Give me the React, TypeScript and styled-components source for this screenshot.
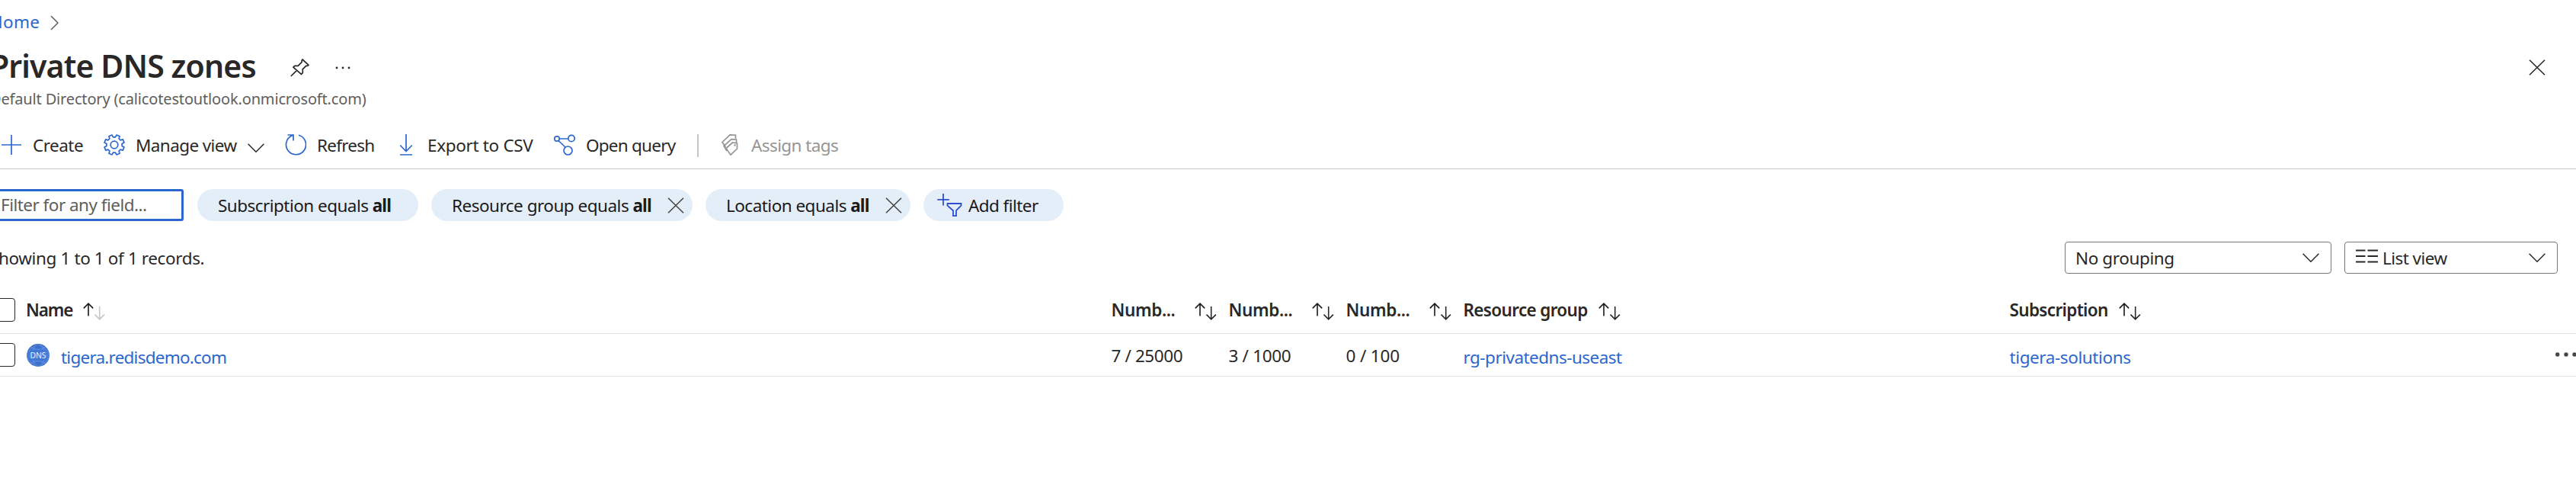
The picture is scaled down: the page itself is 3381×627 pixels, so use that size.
import React from "react";
import styled, { createGlobalStyle } from "styled-components";

const ink = "#292827";
const blue = "#2c67cd";

const GlobalStyle = createGlobalStyle`
  html, body { margin: 0; background: #fff; overflow: hidden; }
  * { box-sizing: border-box; }
  svg { display: block; flex: none; fill: none; }
`;

const Page = styled.main`
  height: 627px;
  overflow: hidden;
  color: ${ink};
  font-family: "Noto Sans", "Open Sans", sans-serif;
  font-size: 22.5px;
  white-space: nowrap;
`;

const Text = styled.span<{ $ls?: number }>`
  letter-spacing: ${(p) => p.$ls ?? 0}px;
`;
const Link = styled.a<{ $ls?: number }>`
  color: ${blue};
  letter-spacing: ${(p) => p.$ls ?? 0}px;
`;
const Bold = styled.b`
  font-weight: 700;
  letter-spacing: -0.9px;
`;

const Breadcrumb = styled.nav`
  display: flex;
  align-items: center;
  height: 56px;
  padding-top: 1px;
  margin-left: -13px;
  gap: 14px;
  & > svg { margin-top: 3px; }
`;
const TitleBar = styled.header`
  display: flex;
  align-items: center;
  height: 60px;
  margin-left: -13px;
  padding-right: 40px;
  & > svg { margin-top: 5px; }
`;
const Title = styled.h1`
  margin: 0 45px 0 0;
  font-size: 41px;
  font-weight: 600;
  line-height: 60px;
  letter-spacing: -0.87px;
`;
const TitleActions = styled.div`
  display: flex;
  align-items: center;
  gap: 34px;
  flex: 1;
  padding-top: 5px;
`;
const Subtitle = styled.div`
  height: 28px;
  line-height: 28px;
  margin-left: -13px;
  font-size: 20px;
  letter-spacing: -0.16px;
  color: #605e5c;
`;

const Toolbar = styled.div`
  display: flex;
  height: 78px;
  padding: 16px 0 0 1px;
  border-bottom: 1px solid #c8c6c4;
`;
const Command = styled.div<{ $width: number; $disabled?: boolean }>`
  display: flex;
  align-items: center;
  gap: 14px;
  width: ${(p) => p.$width}px;
  color: ${(p) => (p.$disabled ? "#979593" : ink)};
  & > svg:first-child { stroke: ${(p) => (p.$disabled ? "#979593" : blue)}; margin-top: -2px; }
  & > svg:last-child { margin-top: 6px; }
`;
const Separator = styled.div`
  align-self: center;
  width: 2px;
  height: 30px;
  margin: 0 27px 0 0;
  background: #c8c6c4;
`;

const Filters = styled.div`
  display: flex;
  align-items: center;
  height: 42px;
  margin-top: 26px;
`;
const FilterField = styled.div`
  width: 244px;
  height: 42px;
  margin: 0 18px 0 -3px;
  padding-left: 1px;
  line-height: 36px;
  border: 3px solid ${blue};
  border-radius: 3px;
  color: #605e5c;
`;
const Pill = styled.div<{ $width: number; $pad?: number }>`
  display: flex;
  align-items: center;
  width: ${(p) => p.$width}px;
  height: 42px;
  margin-right: 17px;
  padding: 0 11px 0 ${(p) => p.$pad ?? 27}px;
  border-radius: 21px;
  background: #e4eef9;
  color: #1b1a19;
  & > svg:last-child { margin-left: auto; }
`;
const PillIcon = styled.svg`
  margin-right: 8px;
`;

const Summary = styled.div`
  display: flex;
  align-items: center;
  height: 42px;
  margin: 27px 24px 0 -14px;
`;
const Selects = styled.div`
  display: flex;
  gap: 17px;
  margin-left: auto;
`;
const Select = styled.div<{ $width: number }>`
  display: flex;
  align-items: center;
  width: ${(p) => p.$width}px;
  height: 42px;
  padding: 0 15px 0 13px;
  border: 1.5px solid #7a7876;
  border-radius: 4px;
  & > svg:last-child { margin-left: auto; }
`;
const ListGlyph = styled.svg`
  margin: -5px 6px 0 1px;
`;

const Table = styled.section`
  margin-top: 16px;
`;
const Row = styled.div<{ $height: number }>`
  display: grid;
  grid-template-columns: 1458.5px 154px 154px 154px 717px 1fr;
  align-items: center;
  height: ${(p) => p.$height}px;
  border-bottom: 1px solid #e6e5e4;
`;
const Cell = styled.div<{ $drop?: number }>`
  display: flex;
  align-items: center;
  padding-top: ${(p) => p.$drop ?? 0}px;
`;
const HeadCell = styled(Cell)<{ $spread?: boolean }>`
  font-weight: 600;
  justify-content: ${(p) => (p.$spread ? "space-between" : "flex-start")};
  padding-right: ${(p) => (p.$spread ? 16 : 0)}px;
  gap: ${(p) => (p.$spread ? 0 : 14)}px;
  & > svg { margin-top: 4px; }
`;
const Checkbox = styled.span`
  flex: none;
  width: 30px;
  height: 31px;
  margin: 0 0 0 -10px;
  border: 1.5px solid ${ink};
  border-radius: 4px;
`;
const NameText = styled.span`
  padding-top: 5px;
`;
const NameCell = styled(Cell)`
  gap: 15px;
`;
const LastCell = styled(Cell)`
  justify-content: space-between;
`;
const MoreDots = styled.svg`
  margin-top: -7px;
`;

const Chevron = ({ color = ink }: { color?: string }) => (
  <svg width="22" height="12" viewBox="0 0 22 12" stroke={color} strokeWidth="1.5">
    <path d="M.6.8 11 11.2 21.4.8" />
  </svg>
);
const Cross = ({ color = "#484644" }: { color?: string }) => (
  <svg width="22" height="21" viewBox="0 0 22 21" stroke={color} strokeWidth="1.6">
    <path d="m1 .7 20 19.6M21 .7 1 20.3" />
  </svg>
);
const Sort = ({ down = ink }: { down?: string }) => (
  <svg width="29" height="23" viewBox="0 0 29 23" strokeWidth="1.6">
    <path stroke="#1b1a19" d="M7 17.5V1.2M.8 7.4 7 1.2l6.2 6.2" />
    <path stroke={down} d="M21.7 5v16.7M15.5 15.6l6.2 6.2 6.2-6.2" />
  </svg>
);

const gearPath = (() => {
  const pts: string[] = [];
  for (let i = 0; i < 8; i++) {
    const a = (i * Math.PI) / 4 + Math.PI / 8;
    for (const [offset, r] of [[-0.25, 10.2], [-0.17, 13.3], [0.17, 13.3], [0.25, 10.2]]) {
      pts.push(`${(14 + r * Math.cos(a + offset)).toFixed(2)} ${(14 + r * Math.sin(a + offset)).toFixed(2)}`);
    }
  }
  return `M${pts.join("L")}Z`;
})();

const Icon = ({ children }: { children: React.ReactNode }) => (
  <svg width="28" height="28" viewBox="0 0 28 28" strokeWidth="1.7">{children}</svg>
);

const DnsIcon = () => (
  <svg width="30" height="30" viewBox="0 0 30 30">
    <defs>
      <linearGradient id="globe" x1="0" y1="0" x2="0" y2="1">
        <stop offset="0" stopColor="#3467c6" />
        <stop offset=".5" stopColor="#4a80dc" />
        <stop offset="1" stopColor="#3568c8" />
      </linearGradient>
    </defs>
    <circle cx="15" cy="15" r="15" fill="url(#globe)" />
    <g stroke="#86acea" strokeWidth=".7" opacity=".75">
      <path d="M5 4q10 7 20 0M5 26q10-7 20 0M8 9Q9 4 15 .5 22 4 23 9M8 21q1 5 7 8.5 7-3.500 8-8.5M1 11Q6 6 12 1M29 11Q24 6 18 1M1 19q5 6 11 10M29 19q-5 6-11 10" />
    </g>
    <text x="15" y="19.2" textAnchor="middle" fill="#e6eefc" fontSize="11.5" textLength="21" lengthAdjust="spacingAndGlyphs">DNS</text>
  </svg>
);

export default function App() {
  return (
    <Page>
      <GlobalStyle />
      <Breadcrumb>
        <Link $ls={0.3}>Home</Link>
        <svg width="11" height="20" viewBox="0 0 11 20" stroke="#605e5c" strokeWidth="1.5"><path d="m1 1 9 9-9 9" /></svg>
      </Breadcrumb>
      <TitleBar>
        <Title>Private DNS zones</Title>
        <TitleActions>
          <svg width="25" height="24" viewBox="0 0 25 24" stroke={ink} strokeWidth="1.7" strokeLinejoin="round">
            <path d="M.8 23 8.5 15.3M16 1l8 7.3-1.3 1h-2l-4.5 4.5.2 4.5-2 2L3.900 11.2l2-1.900h4.300l5-5V2.200z" />
          </svg>
          <svg width="20" height="4" viewBox="0 0 20 4"><g fill={ink}><circle cx="2" cy="2" r="1.4" /><circle cx="10" cy="2" r="1.4" /><circle cx="18" cy="2" r="1.4" /></g></svg>
        </TitleActions>
        <Cross color={ink} />
      </TitleBar>
      <Subtitle>Default Directory (calicotestoutlook.onmicrosoft.com)</Subtitle>

      <Toolbar>
        <Command $width={135}>
          <Icon><path d="M14 1v26M1 14h26" /></Icon>
          <Text $ls={-0.52}>Create</Text>
        </Command>
        <Command $width={238}>
          <Icon><path d={gearPath} strokeLinejoin="round" /><circle cx="14" cy="14" r="4.8" /></Icon>
          <Text $ls={-0.6}>Manage view</Text>
          <Chevron />
        </Command>
        <Command $width={145}>
          <Icon><path d="M18 1.2A13 13 0 1 1 8.5 2.2L11 1M3.5 1H11v7.5" /></Icon>
          <Text $ls={-0.74}>Refresh</Text>
        </Command>
        <Command $width={208}>
          <Icon><path d="M14 0v22.5M6.2 14.5l7.8 8 7.800-8M6 27h16" /></Icon>
          <Text $ls={-0.33}>Export to CSV</Text>
        </Command>
        <Command $width={188}>
          <Icon><circle cx="4" cy="6" r="3.2" /><circle cx="23" cy="5.5" r="4.2" /><circle cx="18.5" cy="21.5" r="5.5" /><path d="M7.2 6h11.5M6 8.5l9 8.5" /></Icon>
          <Text $ls={-0.77}>Open query</Text>
        </Command>
        <Separator />
        <Command $width={170} $disabled>
          <Icon>
            <path d="M8.5 17 4 10.500 14 .9l7.500.3v4.500M10 22l-4-6.500 10-8.800 6.500.3v4M9 18.500 17.500 11l6 .9V19L15 27.200z" />
            <circle cx="20.5" cy="14.5" r=".5" />
          </Icon>
          <Text $ls={-0.6}>Assign tags</Text>
        </Command>
      </Toolbar>

      <Filters>
        <FilterField><Text $ls={-0.52}>Filter for any field...</Text></FilterField>
        <Pill $width={290}><Text $ls={-0.53}>Subscription equals <Bold>all</Bold></Text></Pill>
        <Pill $width={343}><Text $ls={-0.5}>Resource group equals <Bold>all</Bold></Text><Cross /></Pill>
        <Pill $width={269}><Text $ls={-0.52}>Location equals <Bold>all</Bold></Text><Cross /></Pill>
        <Pill $width={184} $pad={18}>
          <PillIcon width="33" height="30" viewBox="0 0 33 30" stroke="#2b4fd0" strokeWidth="1.8">
            <path d="M8 0v15.500M.3 7.800h15.500M13.500 13h18v2.700l-6.500 6.500v7h-4v-7l-7.500-6.500z" />
          </PillIcon>
          <Text $ls={-0.57}>Add filter</Text>
        </Pill>
      </Filters>

      <Summary>
        <Text $ls={-0.38}>Showing 1 to 1 of 1 records.</Text>
        <Selects>
          <Select $width={350}><Text $ls={-0.4}>No grouping</Text><Chevron /></Select>
          <Select $width={280}>
            <ListGlyph width="29" height="18" viewBox="0 0 29 18" stroke={ink} strokeWidth="1.8">
              <path d="M0 1.500h12.500M15.500 1.500H29M0 9h12.500M15.500 9H29M0 16.500h12.500M15.500 16.500H29" />
            </ListGlyph>
            <Text $ls={-0.55}>List view</Text>
            <Chevron />
          </Select>
        </Selects>
      </Summary>

      <Table>
        <Row $height={63}>
          <HeadCell><Checkbox /><Text $ls={-1.15}>Name</Text><Sort down="#c8c6c4" /></HeadCell>
          {[0, 1, 2].map((n) => (
            <HeadCell key={n} $spread><Text $ls={-0.37}>Numb...</Text><Sort /></HeadCell>
          ))}
          <HeadCell><Text $ls={-0.65}>Resource group</Text><Sort /></HeadCell>
          <HeadCell><Text $ls={-0.66}>Subscription</Text><Sort /></HeadCell>
        </Row>
        <Row $height={56}>
          <NameCell>
            <Checkbox />
            <DnsIcon />
            <NameText><Link $ls={-0.77}>tigera.redisdemo.com</Link></NameText>
          </NameCell>
          <Cell $drop={2}><Text $ls={-0.39}>7 / 25000</Text></Cell>
          <Cell $drop={2}><Text $ls={-0.32}>3 / 1000</Text></Cell>
          <Cell $drop={2}><Text $ls={-0.15}>0 / 100</Text></Cell>
          <Cell $drop={5}><Link $ls={-0.52}>rg-privatedns-useast</Link></Cell>
          <LastCell $drop={5}>
            <Link $ls={-0.4}>tigera-solutions</Link>
            <MoreDots width="27" height="6" viewBox="0 0 27 6"><g fill="#484644"><circle cx="2.7" cy="3" r="2.7" /><circle cx="14" cy="3" r="2.7" /><circle cx="25" cy="3" r="2.7" /></g></MoreDots>
          </LastCell>
        </Row>
      </Table>
    </Page>
  );
}
